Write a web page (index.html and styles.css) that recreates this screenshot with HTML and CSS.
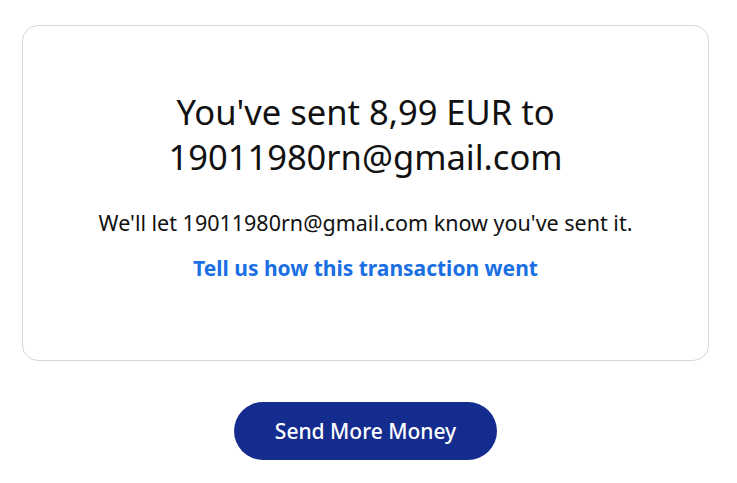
FILE: index.html
```html
<!DOCTYPE html>
<html lang="en">
<head>
<meta charset="utf-8">
<link rel="stylesheet" href="styles.css">
</head>
<body>
<main class="page">
  <section class="card">
    <h1 class="title">You've sent 8,99 EUR to 19011980rn@gmail.com</h1>
    <p class="note">We'll let 19011980rn@gmail.com know you've sent it.</p>
    <a class="feedback" href="#">Tell us how this transaction went</a>
  </section>
  <div class="actions">
    <button class="primary" type="button">Send More Money</button>
  </div>
</main>
</body>
</html>
```
FILE: styles.css
```css
html, body {
  margin: 0;
  padding: 0;
  background: #ffffff;
}
body {
  font-family: "Noto Sans", Lato, sans-serif;
  color: #111111;
}
.page {
  padding: 25px 28px 0 22px;
  display: flex;
  flex-direction: column;
  align-items: stretch;
}
.card {
  border: 1px solid #d6d6d6;
  border-radius: 16px;
  height: 336px;
  box-sizing: border-box;
  display: flex;
  flex-direction: column;
  align-items: center;
  padding: 63px 40px 0;
  text-align: center;
}
.title {
  margin: 0;
  font-size: 34.5px;
  font-weight: 400;
  line-height: 45px;
  max-width: 460px;
}
.note {
  margin: 30px 0 0;
  font-size: 21.5px;
  line-height: 28px;
}
.feedback {
  margin-top: 17px;
  font-size: 21px;
  font-weight: 700;
  line-height: 28px;
  color: #1a6fe3;
  text-decoration: none;
}
.actions {
  display: flex;
  justify-content: center;
  margin-top: 41px;
}
.primary {
  width: 263px;
  height: 58px;
  border: none;
  border-radius: 29px;
  background: #142c8e;
  color: #ffffff;
  font-family: inherit;
  font-size: 21px;
  font-weight: 500;
  cursor: pointer;
}
```
